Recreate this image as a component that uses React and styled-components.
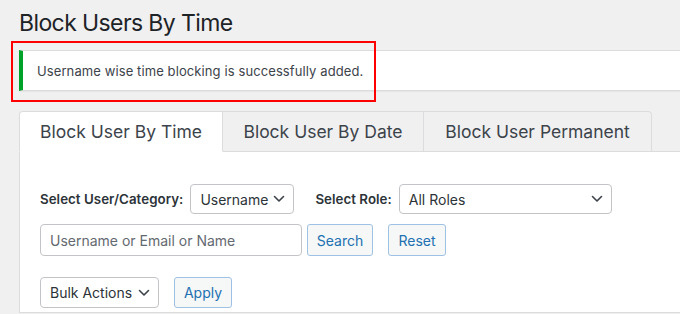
import React from "react";
import styled, { createGlobalStyle } from "styled-components";

const Global = createGlobalStyle`
  html, body { margin: 0; padding: 0; background: #f0f0f1; overflow: hidden; }
  body { font-family: Inter, "Noto Sans", "Liberation Sans", sans-serif; color: #3c434a; }
  * { box-sizing: border-box; }
`;

const Page = styled.div`
  position: relative;
  width: 680px;
  height: 314px;
  overflow: hidden;
  padding-left: 19px;
`;

const Title = styled.h1`
  margin: 0;
  padding-top: 8px;
  font-size: 23px;
  font-weight: 400;
  line-height: 30px;
  letter-spacing: -0.6px;
  color: #1d2327;
`;

const Notice = styled.div`
  margin-top: 12px;
  width: 700px;
  height: 41px;
  background: #fff;
  border: 1px solid #dcdcde;
  border-left: 4px solid #00a32a;
  box-shadow: 0 1px 1px rgba(0, 0, 0, 0.04);
  display: flex;
  align-items: center;
  padding-left: 14px;
  font-size: 13px;
  letter-spacing: 0.1px;
  color: #3c434a;
`;

const Highlight = styled.div`
  position: absolute;
  left: 11px;
  top: 41px;
  width: 365px;
  height: 61px;
  border: 2px solid #ff0000;
  pointer-events: none;
`;

const Tabs = styled.div`
  display: flex;
  margin-top: 20px;
`;

const Tab = styled.div`
  height: 41px;
  display: flex;
  align-items: center;
  justify-content: center;
  width: ${(p) => p.$w}px;
  font-size: 17.5px;
  color: #3c434a;
  background: ${(p) => (p.$active ? "#fff" : "#f0f0f1")};
  border: 1px solid #dcdcde;
  border-bottom: ${(p) => (p.$active ? "1px solid #fff" : "1px solid #dcdcde")};
  border-left: ${(p) => (p.$first ? "1px solid #dcdcde" : "none")};
  border-top-right-radius: ${(p) => (p.$last ? "4px" : "0")};
  border-top-left-radius: ${(p) => (p.$first ? "4px" : "0")};
  margin-bottom: -1px;
  position: relative;
  z-index: 1;
`;

const Panel = styled.div`
  width: 700px;
  height: 162px;
  background: #fff;
  border: 1px solid #dcdcde;
  padding: 32px 0 0 20px;
  display: flex;
  flex-direction: column;
`;

const Row = styled.div`
  display: flex;
  align-items: center;
  margin-bottom: ${(p) => p.$mb || 0}px;
`;

const Label = styled.label`
  font-size: 13.3px;
  font-weight: 600;
  letter-spacing: 0.05px;
  color: #2c3338;
  margin-right: ${(p) => p.$mr || 4}px;
`;

const SelectBox = styled.div`
  display: flex;
  align-items: center;
  justify-content: space-between;
  height: ${(p) => p.$h || 30}px;
  width: ${(p) => p.$w}px;
  padding: 0 8px 0 9px;
  border: 1px solid #c3c4c7;
  border-radius: 4px;
  background: #fff;
  font-size: 14px;
  color: #2c3338;
  margin-right: ${(p) => p.$mr || 0}px;
`;

const Input = styled.div`
  display: flex;
  align-items: center;
  width: 262px;
  height: 32px;
  padding: 0 9px;
  border: 1px solid #c3c4c7;
  border-radius: 4px;
  background: #fff;
  font-size: 14px;
  color: #646970;
  margin-right: 5px;
`;

const Button = styled.div`
  display: flex;
  align-items: center;
  justify-content: center;
  width: ${(p) => p.$w}px;
  height: ${(p) => p.$h || 32}px;
  border: 1px solid #9ec2e6;
  border-radius: 3px;
  background: #f6f7f7;
  color: #2271b1;
  font-size: 14px;
  margin-right: ${(p) => p.$mr || 0}px;
`;

const Chevron = () => (
  <svg width="12" height="8" viewBox="0 0 12 8" fill="none">
    <path d="M1.5 1.5 L6 6 L10.5 1.5" stroke="#3c434a" strokeWidth="1.6" strokeLinecap="round" strokeLinejoin="round" />
  </svg>
);

export default function App() {
  return (
    <>
      <Global />
      <Page>
        <Title>Block Users By Time</Title>
        <Notice>Username wise time blocking is successfully added.</Notice>
        <Tabs>
          <Tab $active $first $w={204}>Block User By Time</Tab>
          <Tab $w={201}>Block User By Date</Tab>
          <Tab $last $w={228}>Block User Permanent</Tab>
        </Tabs>
        <Panel>
          <Row $mb={10}>
            <Label $mr={7}>Select User/Category:</Label>
            <SelectBox $w={104} $mr={21}>
              Username <Chevron />
            </SelectBox>
            <Label $mr={7}>Select Role:</Label>
            <SelectBox $w={213}>
              All Roles <Chevron />
            </SelectBox>
          </Row>
          <Row $mb={21}>
            <Input>Username or Email or Name</Input>
            <Button $w={66} $mr={15}>Search</Button>
            <Button $w={58}>Reset</Button>
          </Row>
          <Row>
            <SelectBox $w={119} $h={31} $mr={15}>
              Bulk Actions <Chevron />
            </SelectBox>
            <Button $w={58} $h={31}>Apply</Button>
          </Row>
        </Panel>
        <Highlight />
      </Page>
    </>
  );
}
